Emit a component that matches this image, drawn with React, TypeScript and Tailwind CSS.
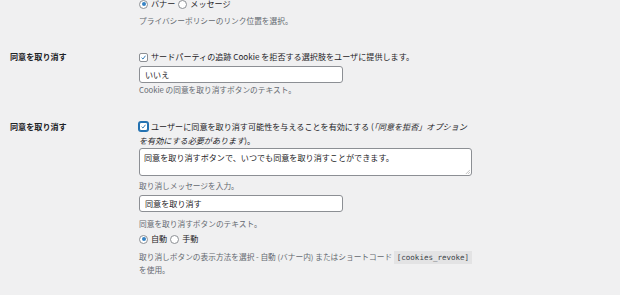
import React from "react";

const font = { fontFamily: '"Noto Sans CJK JP", "Noto Sans", sans-serif' };

const Check: React.FC<{ focus?: boolean }> = ({ focus }) => (
  <span
    className={
      "inline-flex items-center justify-center w-[9px] h-[9px] rounded-[2px] bg-white shrink-0 " +
      (focus
        ? "border border-[#2271b1] shadow-[0_0_0_1px_#2271b1]"
        : "border border-[#8c8f94]")
    }
  >
    <svg viewBox="0 0 20 20" className="w-[9px] h-[9px]">
      <path d="M4.5 10.5 L8.5 14.5 L15.5 5" fill="none" stroke="#2271b1" strokeWidth="2.6" />
    </svg>
  </span>
);

const Radio: React.FC<{ on?: boolean }> = ({ on }) => (
  <span className="inline-flex items-center justify-center w-[9px] h-[9px] rounded-full border border-[#8c8f94] bg-white shrink-0">
    {on && <span className="w-[4px] h-[4px] rounded-full bg-[#3582c4]" />}
  </span>
);

const Desc: React.FC<{ children: React.ReactNode; className?: string }> = ({ children, className }) => (
  <p className={"text-[7.7px] leading-[13px] text-[#646970] " + (className ?? "")}>{children}</p>
);

export default function App() {
  return (
    <div className="w-[620px] h-[295px] overflow-hidden bg-[#f0f0f1] text-[#1d2327]" style={font}>
      {/* previous setting, cut off at top */}
      <div className="pl-[139px] -mt-[2px]">
        <div className="flex items-center gap-[3px] h-[12px] text-[8.1px]">
          <Radio on />
          <span>バナー</span>
          <Radio />
          <span>メッセージ</span>
        </div>
        <Desc className="mt-[4px]">プライバシーポリシーのリンク位置を選択。</Desc>
      </div>

      {/* row 1 */}
      <div className="flex mt-[24px]">
        <div className="w-[139px] pl-[10px] text-[8.1px] font-bold leading-[12px]">同意を取り消す</div>
        <div className="flex-1">
          <label className="flex items-center gap-[3px] h-[12px] text-[8.1px]">
            <Check />
            <span>サードパーティの追跡 Cookie を拒否する選択肢をユーザに提供します。</span>
          </label>
          <div className="mt-[3px] w-[204px] h-[17px] bg-white border border-[#8c8f94] rounded-[3px] px-[5px] text-[8.1px] leading-[15px]">
            いいえ
          </div>
          <Desc>Cookie の同意を取り消すボタンのテキスト。</Desc>
        </div>
      </div>

      {/* row 2 */}
      <div className="flex mt-[24px]">
        <div className="w-[139px] pl-[10px] text-[8.1px] font-bold leading-[13px]">同意を取り消す</div>
        <div className="flex-1">
          <div className="w-[345px] text-[8.1px] leading-[13px]">
            <span className="inline-block align-[-1px] mr-[3px]">
              <Check focus />
            </span>
            ユーザーに同意を取り消す可能性を与えることを有効にする (<em>「同意を拒否」オプション
            <br />
            を有効にする必要があります</em>)。
          </div>
          <div className="relative mt-[1px] w-[333px] h-[28px] bg-white border border-[#8c8f94] rounded-[3px] px-[4px] pt-[3px] text-[8.1px] leading-[12px]">
            同意を取り消すボタンで、いつでも同意を取り消すことができます。
            <svg viewBox="0 0 6 6" className="absolute right-[1px] bottom-[1px] w-[5px] h-[5px]">
              <path d="M1 6 L6 1 M3.5 6 L6 3.5" stroke="#9a9a9a" strokeWidth="0.7" />
            </svg>
          </div>
          <Desc className="mt-[3px]">取り消しメッセージを入力。</Desc>
          <div className="mt-[3px] w-[204px] h-[17px] bg-white border border-[#8c8f94] rounded-[3px] px-[5px] text-[8.1px] leading-[15px]">
            同意を取り消す
          </div>
          <Desc className="mt-[5px]">同意を取り消すボタンのテキスト。</Desc>
          <div className="mt-[3px] flex items-center gap-[3px] h-[12px] text-[8.1px]">
            <Radio on />
            <span>自動</span>
            <Radio />
            <span>手動</span>
          </div>
          <Desc className="mt-[5px] w-[345px]">
            取り消しボタンの表示方法を選択 - 自動 (バナー内) またはショートコード{" "}
            <code
              className="bg-[#e3e3e4] px-[3px] py-[2px] text-[7.5px] leading-[9px] text-[#3c434a]"
              style={{ fontFamily: '"DejaVu Sans Mono", "Liberation Mono", monospace' }}
            >
              [cookies_revoke]
            </code>
            <br />
            を使用。
          </Desc>
        </div>
      </div>
    </div>
  );
}
